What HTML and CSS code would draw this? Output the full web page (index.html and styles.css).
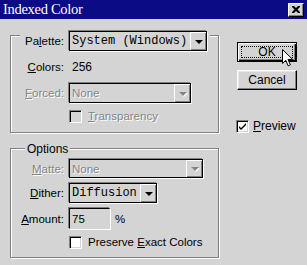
FILE: index.html
```html
<!DOCTYPE html>
<html>
<head>
<meta charset="utf-8">
<link rel="stylesheet" href="styles.css">
</head>
<body>
<div class="titlebar">
  <span class="title">Indexed Color</span>
  <span class="close"><svg width="8" height="7" viewBox="0 0 8 7"><path d="M0 0h2l2 2 2-2h2v1l-2.5 2.5 2.5 2.5v1h-2l-2-2-2 2h-2v-1l2.5-2.5-2.5-2.5z" fill="#000"/></svg></span>
</div>
<div class="main">
  <div class="left">
    <div class="group g1">
      <div class="head h1">
        <span class="hlbl">Pa<u>l</u>ette:</span>
        <div class="field sel w-palette"><span class="val mono">System (Windows)</span><span class="arrow"><i class="tri"></i></span></div>
      </div>
      <div class="row r-colors"><span class="lbl"><u>C</u>olors:</span><span class="num">256</span></div>
      <div class="row r-forced"><span class="lbl dis"><u>F</u>orced:</span>
        <div class="field sel w-forced"><span class="val dis">None</span><span class="arrow"><i class="tri dtri"></i></span></div></div>
      <div class="row r-trans"><span class="lbl"></span><span class="chk chk-dis"></span><span class="clbl dis"><u>T</u>ransparency</span></div>
    </div>
    <div class="group g2">
      <div class="head h2">Options</div>
      <div class="row r-matte"><span class="lbl dis"><u>M</u>atte:</span>
        <div class="field sel w-matte"><span class="val dis">None</span><span class="arrow"><i class="tri dtri"></i></span></div></div>
      <div class="row r-dither"><span class="lbl"><u>D</u>ither:</span>
        <div class="field sel w-dither"><span class="val mono">Diffusion</span><span class="arrow"><i class="tri"></i></span></div></div>
      <div class="row r-amount"><span class="lbl"><u>A</u>mount:</span>
        <div class="field input w-amount"><span class="val">75</span></div><span class="pct">%</span></div>
      <div class="row r-preserve"><span class="lbl"></span><span class="chk"></span><span class="clbl">Preserve <u>E</u>xact Colors</span></div>
    </div>
  </div>
  <div class="right">
    <div class="btn default"><span class="focus">OK</span></div>
    <div class="btn cancel">Cancel</div>
    <div class="prow"><span class="chk checked"><svg width="9" height="9" viewBox="0 0 9 9"><path d="M1 4l2 2 5-5v2l-5 5-2-2z" fill="#000"/></svg></span><span class="clbl"><u>P</u>review</span></div>
  </div>
</div>
<svg class="cursor" width="12" height="18" viewBox="0 0 12 18"><path d="M0.5 0.5v14l3.3-3.2 2.4 5.6 2.2-1-2.4-5.5h4.6z" fill="#fff" stroke="#000" stroke-width="1"/></svg>
</body>
</html>
```
FILE: styles.css
```css
* { box-sizing: border-box; }
html, body { margin: 0; padding: 0; }
body {
  width: 307px;
  height: 265px;
  overflow: hidden;
  background: #d4d4d4;
  font-family: "Liberation Sans", Arial, sans-serif;
  font-size: 11.5px;
  color: #000;
  position: relative;
}
u { text-decoration: underline; text-underline-offset: 1px; }

.titlebar {
  height: 19px;
  background: #0b0b86;
  display: flex;
  align-items: center;
  justify-content: space-between;
  padding: 0 3px 0 3px;
}
.title {
  font-family: "Liberation Serif", "Times New Roman", serif;
  font-size: 14.5px;
  letter-spacing: -0.3px;
  color: #fff;
}
.close {
  width: 16px;
  height: 14px;
  background: #d4d4d4;
  border: 1px solid;
  border-color: #fff #000 #000 #fff;
  box-shadow: inset -1px -1px 0 #808080;
  display: flex;
  align-items: center;
  justify-content: center;
}

.main { display: flex; }
.left { margin-left: 10px; width: 209px; margin-top: 16px; }
.right {
  margin-left: 18px;
  margin-top: 23px;
  width: 60px;
  display: flex;
  flex-direction: column;
}

.group {
  border: 1px solid #808080;
  box-shadow: inset 1px 1px 0 #fff, 1px 1px 0 #fff;
}
.g1 { padding-bottom: 6px; }
.g2 { margin-top: 15px; padding-bottom: 5px; }

.head {
  width: max-content;
  background: #d4d4d4;
}
.h1 {
  display: flex;
  align-items: center;
  margin: -5px 0 0 9px;
  padding-right: 3px;
}
.hlbl { width: 44px; text-align: right; margin-right: 5px; }
.h2 {
  margin: -7px 0 0 14px;
  padding: 0 2px;
  height: 14px;
  line-height: 14px;
  font-size: 12px;
}

.row { display: flex; align-items: center; height: 20px; }
.lbl { width: 53px; text-align: right; margin-right: 5px; flex: none; }
.num { margin-left: 3px; font-size: 12px; }
.r-colors { margin-top: 6px; }
.r-forced { margin-top: 6px; }
.r-trans { margin-top: 3px; }
.r-matte { margin-top: 3px; height: 19px; }
.r-dither { margin-top: 5px; }
.r-amount { margin-top: 5px; height: 21px; }
.r-preserve { margin-top: 3px; }

.dis { color: #848484; text-shadow: 1px 1px 0 #fff; }

.field {
  height: 100%;
  display: flex;
  align-items: center;
  border: 1px solid #000;
  box-shadow: -1px -1px 0 #808080, 1px 1px 0 #fff;
  background: #d4d4d4;
  position: relative;
}
.field .val { flex: 1; padding-left: 2px; white-space: nowrap; overflow: hidden; }
.mono {
  font-family: "Liberation Mono", "Courier New", monospace;
  font-size: 12px;
}
.input {
  border-color: #000 #d4d4d4 #d4d4d4 #000;
  box-shadow: -1px -1px 0 #808080, 1px 1px 0 #fff;
}
.w-palette { width: 138px; height: 20px; }
.w-forced { width: 122px; }
.w-matte { width: 134px; }
.w-dither { width: 88px; }
.w-amount { width: 41px; }
.pct { margin-left: 5px; }

.arrow {
  width: 16px;
  align-self: stretch;
  background: #d4d4d4;
  border-left: 1px solid #fff;
  border-top: 1px solid #fff;
  box-shadow: inset -1px -1px 0 #808080;
  display: flex;
  align-items: center;
  justify-content: center;
}
.tri {
  display: block;
  width: 0;
  height: 0;
  border-left: 4px solid transparent;
  border-right: 4px solid transparent;
  border-top: 4px solid #000;
  margin-left: 1px;
}
.dtri { border-top-color: #848484; filter: drop-shadow(1px 1px 0 #fff); }

.chk {
  width: 13px;
  height: 13px;
  flex: none;
  background: #fff;
  border: 1px solid;
  border-color: #808080 #fff #fff #808080;
  box-shadow: inset 1px 1px 0 #000, inset -1px -1px 0 #d4d4d4;
  display: flex;
  align-items: center;
  justify-content: center;
  margin-left: 0;
}
.chk-dis { background: #d4d4d4; }
.clbl { margin-left: 6px; white-space: nowrap; }

.btn {
  width: 60px;
  height: 20px;
  display: flex;
  align-items: center;
  justify-content: center;
  border: 1px solid;
  border-color: #fff #000 #000 #fff;
  box-shadow: inset -1px -1px 0 #808080, inset 1px 1px 0 #e6e6e6;
  font-size: 12px;
}
.btn.default {
  border: 1px solid #000;
  box-shadow: inset 1px 1px 0 #fff, inset -1px -1px 0 #000, inset -2px -2px 0 #808080;
  padding: 3px;
}
.focus {
  width: 100%;
  height: 100%;
  outline: 1px dotted #000;
  outline-offset: -1px;
  display: flex;
  align-items: center;
  justify-content: center;
}
.cancel { margin-top: 8px; }
.prow { display: flex; align-items: center; height: 20px; margin-top: 26px; margin-left: -1px; }
.prow .clbl { margin-left: 4px; font-size: 12px; }

.cursor { position: absolute; left: 282px; top: 49px; }
```
